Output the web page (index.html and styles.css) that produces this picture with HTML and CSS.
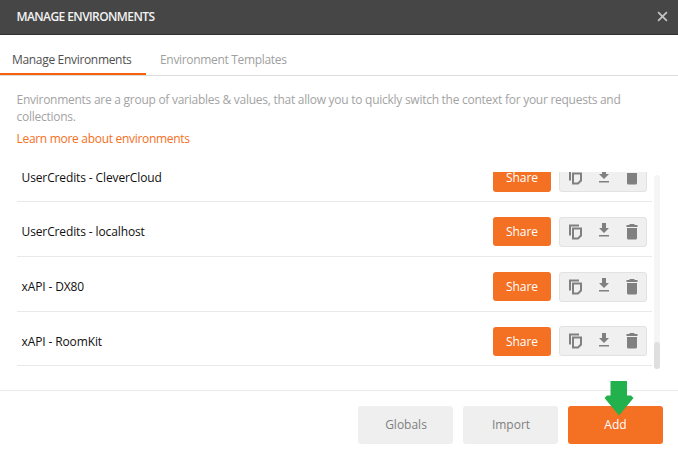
FILE: index.html
```html
<!DOCTYPE html>
<html lang="en">
<head>
<meta charset="utf-8">
<title>Manage Environments</title>
<link rel="stylesheet" href="styles.css">
</head>
<body>
<svg class="sprite" aria-hidden="true">
  <symbol id="copy" viewBox="0 0 14 16">
    <path d="M1 11.5V1.5H10" fill="none" stroke="currentColor" stroke-width="2"/>
    <path d="M4 4.5H12V11.5L9 14.5H4Z" fill="none" stroke="currentColor" stroke-width="2"/>
  </symbol>
  <symbol id="download" viewBox="0 0 12 14">
    <path d="M4 0H8V5H11L6 10L1 5H4ZM1 12H11V13.6H1Z" fill="currentColor"/>
  </symbol>
  <symbol id="trash" viewBox="0 0 12 16">
    <path d="M3.5 0H8.5V1H11.5V3H.5V1H3.5ZM1 4H11V14Q11 15.5 9.5 15.5H2.5Q1 15.5 1 14Z" fill="currentColor"/>
  </symbol>
</svg>
<div class="modal">
  <header class="header">
    <h1 class="title">MANAGE ENVIRONMENTS</h1>
    <svg class="close" viewBox="0 0 12 12"><path d="M1.2 1.2L10.8 10.8M10.8 1.2L1.2 10.8"/></svg>
  </header>
  <nav class="tabs">
    <div class="tab active">Manage Environments</div>
    <div class="tab">Environment Templates</div>
  </nav>
  <section class="intro">
    <p class="text">Environments are a group of variables &amp; values, that allow you to quickly switch the context for your requests and collections.</p>
    <a class="link">Learn more about environments</a>
  </section>
  <main class="viewport">
    <div class="list">
      <div class="row"><span class="name">UserCredits - CleverCloud</span><button class="share">Share</button><div class="tools"><svg class="copy"><use href="#copy"/></svg><svg class="download"><use href="#download"/></svg><svg class="trash"><use href="#trash"/></svg></div></div>
      <div class="row"><span class="name">UserCredits - localhost</span><button class="share">Share</button><div class="tools"><svg class="copy"><use href="#copy"/></svg><svg class="download"><use href="#download"/></svg><svg class="trash"><use href="#trash"/></svg></div></div>
      <div class="row"><span class="name">xAPI - DX80</span><button class="share">Share</button><div class="tools"><svg class="copy"><use href="#copy"/></svg><svg class="download"><use href="#download"/></svg><svg class="trash"><use href="#trash"/></svg></div></div>
      <div class="row"><span class="name">xAPI - RoomKit</span><button class="share">Share</button><div class="tools"><svg class="copy"><use href="#copy"/></svg><svg class="download"><use href="#download"/></svg><svg class="trash"><use href="#trash"/></svg></div></div>
    </div>
    <div class="scrollbar"><div class="thumb"></div></div>
  </main>
  <footer class="footer">
    <button class="btn">Globals</button>
    <button class="btn">Import</button>
    <button class="btn primary">Add<svg class="arrow" viewBox="0 0 30 35"><path d="M6.5 0H23V14.5H27L29.5 17L15 34.5L.5 17L3 14.5H6.5Z"/></svg></button>
  </footer>
</div>
</body>
</html>
```
FILE: styles.css
```css
* { box-sizing: border-box; }
body { margin: 0; background: #fff; font-family: "Open Sans", "Noto Sans", sans-serif; font-size: 12px; color: #101010; overflow: hidden; }
button { font: inherit; border: 0; padding: 0; }
.sprite { display: none; }
.modal { width: 678px; height: 452px; display: flex; flex-direction: column; }
.header { height: 35px; flex: none; display: flex; align-items: center; justify-content: space-between; padding: 0 10px 2px 16.5px; background: #464646; border-bottom: 1px solid #303030; }
.title { margin: 0; padding-top: 1px; font-size: 12px; font-weight: 600; line-height: 16px; color: #f2f2f2; letter-spacing: -.59px; }
.close { width: 11px; height: 11px; fill: none; stroke: #c4c4c4; stroke-width: 1.9; }
.tabs { height: 41px; flex: none; display: flex; border-bottom: 1px solid #dcdcdc; }
.tab { height: 40px; padding: 16px 14px 0 14px; line-height: 18px; color: #a0a0a0; white-space: nowrap; letter-spacing: -.32px; }
.tab.active { width: 146px; padding-left: 12px; border-bottom: 2px solid #f8600c; color: #505050; }
.intro { height: 96px; flex: none; padding: 15px 40px 0 16.5px; letter-spacing: -.3px; }
.text { margin: 0; line-height: 17px; color: #a3a3a3; letter-spacing: -.265px; }
.link { display: block; margin-top: 5px; line-height: 18px; color: #f47023; }
.viewport { height: 198px; flex: none; display: flex; overflow: hidden; padding-left: 17px; }
.list { width: 635px; margin-top: -24.4px; }
.row { height: 54.7px; display: flex; align-items: center; padding: 5.6px 5px 0 4.5px; border-bottom: 1px solid #e9e9e9; }
.name { flex: 1; padding-top: 1px; line-height: 18px; letter-spacing: -.12px; }
.share { width: 58px; height: 29px; margin-right: 8px; border-radius: 3px; background: #f47023; color: #fff; letter-spacing: -.1px; }
.tools { width: 88px; height: 30px; display: flex; align-items: center; justify-content: space-between; padding: 0 9px; border: 1px solid #e2e2e2; border-radius: 3px; background: #f0f0f0; color: #808080; }
.copy { width: 14px; height: 16px; }
.download { width: 12px; height: 14px; margin-right: 2px; margin-top: -3px; }
.trash { width: 12px; height: 16px; margin-right: -1px; }
.scrollbar { width: 6px; height: 194px; margin: 3px 0 0 2px; display: flex; align-items: flex-end; border-radius: 3px; background: #f5f5f5; }
.thumb { width: 6px; height: 27px; border-radius: 3px; background: #dfdfdf; }
.footer { flex: 1; display: flex; justify-content: flex-end; gap: 10px; margin-top: 20px; padding: 14.5px 15px 0 0; border-top: 1px solid #ebebeb; }
.btn { position: relative; width: 95px; height: 38px; padding-left: 1px; border-radius: 3px; background: #efefef; color: #808080; }
.primary { padding-left: 0; background: #f47023; color: #fff; }
.arrow { position: absolute; left: 35.5px; top: -24.5px; width: 30px; height: 35px; fill: #22b14c; }
```
